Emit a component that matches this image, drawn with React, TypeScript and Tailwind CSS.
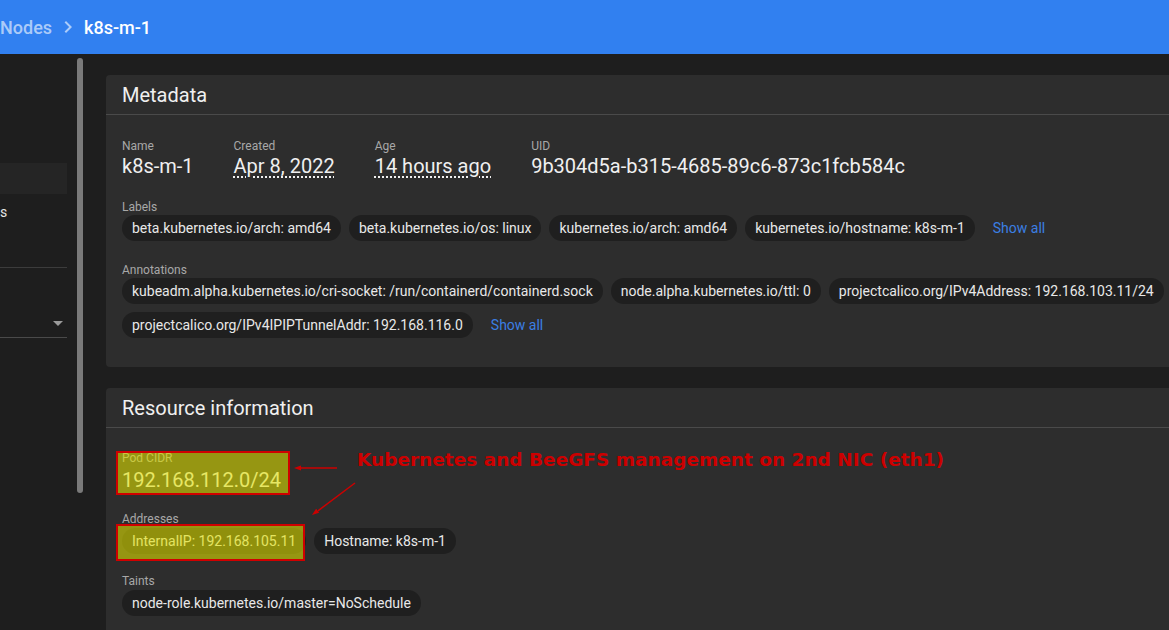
import React from "react";

const Chip = ({ children }: { children: React.ReactNode }) => (
  <div className="h-[26px] px-[10px] rounded-full bg-[#1f1f1f] text-[14px] leading-[26px] text-[#e8e8e8] whitespace-nowrap">
    {children}
  </div>
);

const Label = ({ children, mb = "" }: { children: React.ReactNode; mb?: string }) => (
  <div className={"text-[12px] leading-[16px] text-[#a8a8a8] " + mb}>{children}</div>
);

const ShowAll = () => (
  <div className="h-[26px] pl-[10px] text-[14px] leading-[26px] text-[#3b7fe3] whitespace-nowrap">Show all</div>
);

export default function App() {
  return (
    <div
      className="relative w-[1169px] h-[630px] overflow-hidden bg-[#1e1e1e]"
      style={{ fontFamily: "Roboto, 'Noto Sans', sans-serif" }}
    >
      {/* Header */}
      <div className="h-[54px] bg-[#3180f0] flex items-center text-[18px] font-medium">
        <span className="text-white/60">Nodes</span>
        <svg className="mx-[4px]" width="24" height="24" viewBox="0 0 24 24" fill="rgba(255,255,255,0.6)">
          <path d="M10 6L8.59 7.41 13.17 12l-4.58 4.59L10 18l6-6z" />
        </svg>
        <span className="text-white">k8s-m-1</span>
      </div>

      <div className="flex">
        {/* Sidebar */}
        <div className="flex-col flex w-[67px] shrink-0">
          <div className="mt-[109px] h-[31px] bg-[#252525]" />
          <div className="h-[36px] flex items-center text-[14px] text-[#e6e6e6]">s</div>
          <div className="mt-[37px] h-[1px] bg-[#3c3c3c]" />
          <div className="h-[69px] flex items-end justify-end pr-[4px] pb-[11px]">
            <svg width="10" height="5" viewBox="0 0 10 5">
              <polygon points="0,0 10,0 5,5" fill="#9a9a9a" />
            </svg>
          </div>
          <div className="h-[1px] bg-[#4a4a4a]" />
        </div>
        <div className="ml-[10px] mt-[4px] w-[6px] h-[435px] rounded-full bg-[#7a7a7a] shrink-0" />

        {/* Main */}
        <div className="ml-[23px] pt-[21px] flex flex-col gap-[21px]">
          {/* Metadata card */}
          <div className="w-[1080px] bg-[#2d2d2d] rounded-[4px]">
            <div className="h-[40px] px-[16px] flex items-center text-[20px] text-[#f0f0f0] border-b border-[#4a4a4a]">
              Metadata
            </div>
            <div className="px-[16px] pt-[23px] pb-[29px] flex flex-col gap-[21px]">
              <div className="flex gap-[40px]">
                <div>
                  <Label>Name</Label>
                  <div className="text-[20px] leading-[24px] text-[#f0f0f0]">k8s-m-1</div>
                </div>
                <div>
                  <Label>Created</Label>
                  <div className="text-[20px] leading-[24px] text-[#f0f0f0] underline decoration-dotted underline-offset-[3px]">
                    Apr 8, 2022
                  </div>
                </div>
                <div>
                  <Label>Age</Label>
                  <div className="text-[20px] leading-[24px] text-[#f0f0f0] underline decoration-dotted underline-offset-[3px]">
                    14 hours ago
                  </div>
                </div>
                <div>
                  <Label>UID</Label>
                  <div className="text-[20px] leading-[24px] text-[#f0f0f0]">9b304d5a-b315-4685-89c6-873c1fcb584c</div>
                </div>
              </div>
              <div>
                <Label>Labels</Label>
                <div className="flex flex-wrap gap-[8px]">
                  <Chip>beta.kubernetes.io/arch: amd64</Chip>
                  <Chip>beta.kubernetes.io/os: linux</Chip>
                  <Chip>kubernetes.io/arch: amd64</Chip>
                  <Chip>kubernetes.io/hostname: k8s-m-1</Chip>
                  <ShowAll />
                </div>
              </div>
              <div>
                <Label>Annotations</Label>
                <div className="flex flex-wrap gap-[8px]">
                  <Chip>kubeadm.alpha.kubernetes.io/cri-socket: /run/containerd/containerd.sock</Chip>
                  <Chip>node.alpha.kubernetes.io/ttl: 0</Chip>
                  <Chip>projectcalico.org/IPv4Address: 192.168.103.11/24</Chip>
                  <Chip>projectcalico.org/IPv4IPIPTunnelAddr: 192.168.116.0</Chip>
                  <ShowAll />
                </div>
              </div>
            </div>
          </div>

          {/* Resource information card */}
          <div className="w-[1080px] bg-[#2d2d2d] rounded-[4px]">
            <div className="h-[40px] px-[16px] flex items-center text-[20px] text-[#f0f0f0] border-b border-[#4a4a4a]">
              Resource information
            </div>
            <div className="px-[16px] pt-[22px] pb-[29px] flex flex-col gap-[19px]">
              <div>
                <Label mb="mb-[2px]">Pod CIDR</Label>
                <div className="text-[20px] leading-[24px] text-[#f0f0f0]">192.168.112.0/24</div>
              </div>
              <div>
                <Label mb="mb-[1px]">Addresses</Label>
                <div className="flex flex-wrap gap-[8px]">
                  <Chip>InternalIP: 192.168.105.11</Chip>
                  <Chip>Hostname: k8s-m-1</Chip>
                </div>
              </div>
              <div>
                <Label mb="mb-[1px]">Taints</Label>
                <div className="flex flex-wrap gap-[8px]">
                  <Chip>node-role.kubernetes.io/master=NoSchedule</Chip>
                </div>
              </div>
            </div>
          </div>
        </div>
      </div>

      {/* Annotation overlay */}
      <div className="absolute inset-0 pointer-events-none">
        <div className="absolute left-[116px] top-[451px] w-[174px] h-[44px] border-2 border-[#d00000] bg-[rgba(225,225,0,0.59)]" />
        <div className="absolute left-[116px] top-[524px] w-[189px] h-[37px] border-2 border-[#d00000] bg-[rgba(225,225,0,0.59)]" />
        <div
          className="absolute left-[357px] top-[449px] text-[18.5px] leading-[22px] font-bold text-[#cc0000] whitespace-nowrap"
          style={{ fontFamily: "'DejaVu Sans', sans-serif" }}
        >
          Kubernetes and BeeGFS management on 2nd NIC (eth1)
        </div>
        <svg className="absolute left-0 top-0" width="1169" height="630">
          <line x1="337" y1="468" x2="300" y2="468" stroke="#cc0000" strokeWidth="1.5" />
          <polygon points="294,468 301,465.5 301,470.5" fill="#cc0000" />
          <line x1="355" y1="483" x2="318" y2="510.8" stroke="#cc0000" strokeWidth="1.5" />
          <polygon points="312,515 319.1,512.8 316.1,508.8" fill="#cc0000" />
        </svg>
      </div>
    </div>
  );
}
